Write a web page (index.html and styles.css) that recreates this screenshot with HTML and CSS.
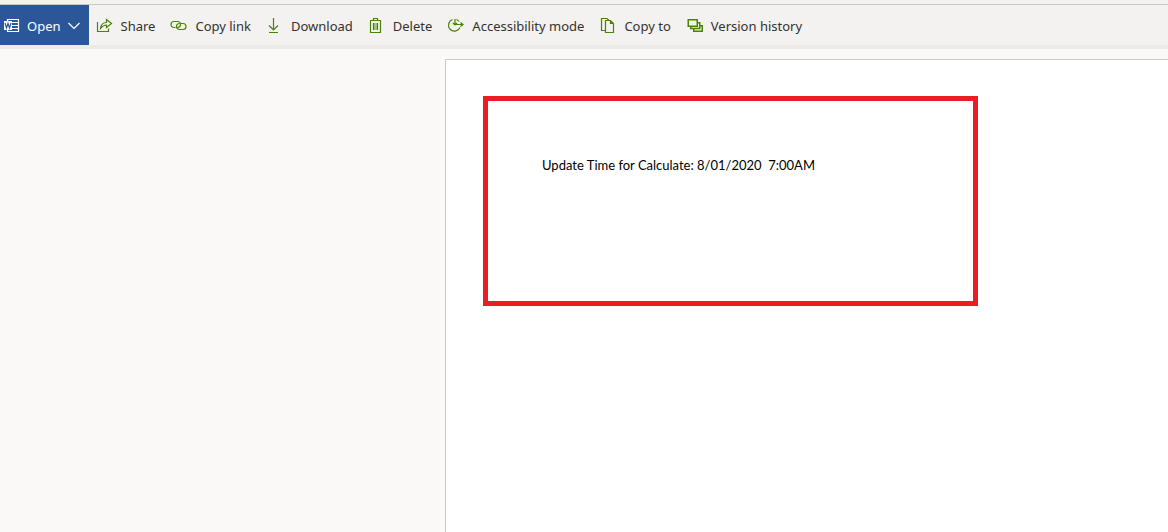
FILE: index.html
```html
<!DOCTYPE html>
<html lang="en">
<head>
<meta charset="utf-8">
<title>Document viewer</title>
<link rel="stylesheet" href="styles.css">
</head>
<body>
<header class="toolbar" role="toolbar" aria-label="Document commands">
  <button class="command command-open" type="button">
    <svg class="icon" viewBox="0 0 16 16" aria-hidden="true"><path d="M3.500 3.500V1.500H14.500V13.500H3.500V11.500M8 4.500H14M8 7.500H14M8 10.500H14"/><path class="solid" d="M0 3H8V12H0Z"/><path class="mark" d="M1 5L2.500 10L4 5.500L5.500 10L7 5"/></svg>
    <span>Open</span>
    <svg class="chevron" viewBox="0 0 12 8" aria-hidden="true"><path d="M.5 1L6 6.500L11.500 1"/></svg>
  </button>
  <button class="command" type="button">
    <svg class="icon" viewBox="0 0 16 16" aria-hidden="true"><path d="M.5 4V13.500H11.500V10.500M3.500 10.500C4 6.500 6.500 4.500 9.500 4.500V1.500L14.500 5.500L9.500 9.500V7C7.500 7 5.500 8 3.500 10.500Z"/></svg>
    <span>Share</span>
  </button>
  <button class="command" type="button">
    <svg class="icon" viewBox="0 0 16 16" aria-hidden="true"><path d="M4.500 9.500H3A3 3 0 0 1 3 3.500H6.500A3 3 0 0 1 6.500 9.500M10 5.500H12A3 3 0 0 1 12 11.500H8.500A3 3 0 0 1 8.500 5.500"/></svg>
    <span>Copy link</span>
  </button>
  <button class="command" type="button">
    <svg class="icon" viewBox="0 0 16 16" aria-hidden="true"><path d="M6.500 0V11.500M2 7.500L6.500 12L11 7.500M2 14.500H11"/></svg>
    <span>Download</span>
  </button>
  <button class="command" type="button">
    <svg class="icon" viewBox="0 0 16 16" aria-hidden="true"><path d="M1 2.500H12M4.500 2V.5H8.500V2M1.500 3V14.500H11.500V3"/><path class="tint" d="M4 5H9V12H4Z"/><path d="M4.500 5V12M8.500 5V12"/></svg>
    <span>Delete</span>
  </button>
  <button class="command" type="button">
    <svg class="icon" viewBox="0 0 16 16" aria-hidden="true"><path d="M4.500 1.500A6 6 0 1 0 12 9.500M7 1V7M5 5L7 7L9 5M8.500 1.500A6 6 0 0 1 11 3.500M8 6.500H15M12.500 4.500L15 6.500L12.500 8.500"/></svg>
    <span>Accessibility mode</span>
  </button>
  <button class="command" type="button">
    <svg class="icon" viewBox="0 0 16 16" aria-hidden="true"><path d="M5 12.500H1.500V.5H7L9 2.500M5.500 2.500H10.500L13.500 5.500V14.500H5.500ZM10.500 3V5.500H13"/></svg>
    <span>Copy to</span>
  </button>
  <button class="command" type="button">
    <svg class="icon icon-bold" viewBox="0 0 16 16" aria-hidden="true"><path d="M6.750 7.750H15.250V13.250H6.750Z"/><path class="sheet" d="M3.750 4.750H12.750V10.500H3.750Z"/><path class="sheet" d="M1.250 1.750H10.250V8.250H1.250Z"/></svg>
    <span>Version history</span>
  </button>
</header>
<main class="viewer">
  <article class="page">
    <section class="callout">
      <p class="note">Update Time for Calculate: 8/01/2020&nbsp; 7:00AM</p>
    </section>
  </article>
</main>
</body>
</html>
```
FILE: styles.css
```css
* { box-sizing: border-box; }
body {
  margin: 0;
  min-height: 100vh;
  display: flex;
  flex-direction: column;
  background: #faf9f8;
  color: #323130;
  font-family: "Segoe UI", "Noto Sans", "Open Sans", sans-serif;
}
.toolbar {
  display: flex;
  height: 49px;
  border-top: 4px solid #f3f2f1;
  border-bottom: 4px solid #edebe9;
  background: #f3f2f1;
  box-shadow: inset 0 1px #c8c8c8;
  padding-top: 1px;
}
.command {
  display: flex;
  align-items: center;
  gap: 8px;
  padding: 2px 8px 0;
  border: 0;
  background: transparent;
  color: inherit;
  font: inherit;
  font-size: 13px;
  line-height: 20px;
  white-space: nowrap;
}
.command-open {
  gap: 7px;
  padding: 2px 9px 0 4px;
  background: #2b579a;
  color: #fff;
}
.icon, .chevron {
  flex: none;
  overflow: visible;
  fill: none;
  stroke: #498205;
  stroke-width: 1.2;
}
.icon { width: 16px; height: 16px; }
.icon-bold { stroke-width: 1.5; }
.chevron { width: 12px; height: 8px; }
.command-open svg { stroke: #fff; }
.command-open .solid { fill: #fff; stroke: none; }
.command-open .mark { stroke: #2b579a; }
.tint { fill: #a5c385; stroke: none; }
.sheet { fill: #f3f2f1; }
.viewer {
  flex: 1;
  display: flex;
  padding: 10px 0 0 445px;
}
.page {
  flex: 1;
  padding: 36px 190px 36px 37px;
  border: solid #c8cacc;
  border-width: 1px 0 0 1px;
  background: #fff;
}
.callout {
  min-height: 210px;
  padding: 54px;
  border: 5px solid #ed1c24;
}
.note {
  margin: 0;
  color: #000;
  font-family: Lato, sans-serif;
  font-size: 13px;
  line-height: 20px;
}
```
